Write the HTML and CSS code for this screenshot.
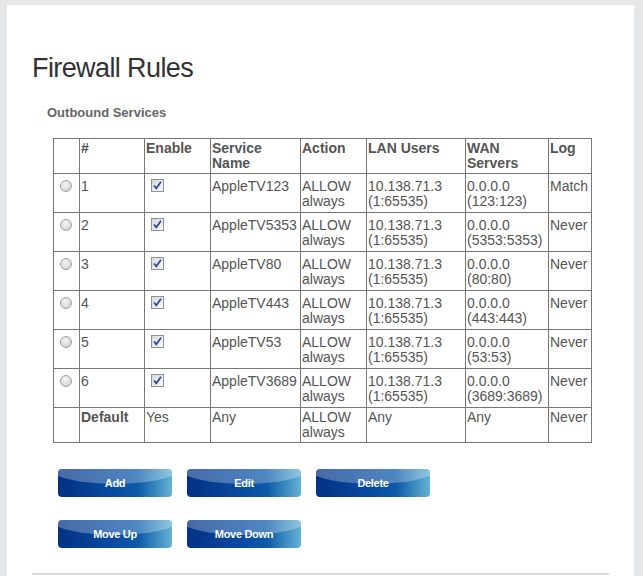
FILE: index.html
```html
<!DOCTYPE html>
<html>
<head>
  <title>Firewall Rules</title>
  <link rel="stylesheet" href="styles.css">
</head>
<body>
  <div class="page">
    <h1>Firewall Rules</h1>

    <div class="section-title">Outbound Services</div>

    <table class="rules">
      <colgroup>
        <col style="width: 26px">
        <col style="width: 65px">
        <col style="width: 66px">
        <col style="width: 90px">
        <col style="width: 66px">
        <col style="width: 99px">
        <col style="width: 83px">
        <col style="width: 43px">
      </colgroup>
      <tr class="head">
        <th></th>
        <th>#</th>
        <th>Enable</th>
        <th>Service Name</th>
        <th>Action</th>
        <th>LAN Users</th>
        <th>WAN Servers</th>
        <th>Log</th>
      </tr>
      <tr class="rule">
        <td><span class="radio"></span></td>
        <td>1</td>
        <td><svg class="check" width="13" height="13" viewBox="0 0 13 13"><rect x="0.5" y="0.5" width="12" height="12" fill="url(#cb)" stroke="#8f9294"/><path d="M3 6.5 L5.3 9.3 L10 2.8" fill="none" stroke="#2a45a0" stroke-width="1.7"/></svg></td>
        <td>AppleTV123</td>
        <td>ALLOW always</td>
        <td>10.138.71.3 (1:65535)</td>
        <td>0.0.0.0 (123:123)</td>
        <td>Match</td>
      </tr>
      <tr class="rule">
        <td><span class="radio"></span></td>
        <td>2</td>
        <td><svg class="check" width="13" height="13" viewBox="0 0 13 13"><rect x="0.5" y="0.5" width="12" height="12" fill="url(#cb)" stroke="#8f9294"/><path d="M3 6.5 L5.3 9.3 L10 2.8" fill="none" stroke="#2a45a0" stroke-width="1.7"/></svg></td>
        <td>AppleTV5353</td>
        <td>ALLOW always</td>
        <td>10.138.71.3 (1:65535)</td>
        <td>0.0.0.0 (5353:5353)</td>
        <td>Never</td>
      </tr>
      <tr class="rule">
        <td><span class="radio"></span></td>
        <td>3</td>
        <td><svg class="check" width="13" height="13" viewBox="0 0 13 13"><rect x="0.5" y="0.5" width="12" height="12" fill="url(#cb)" stroke="#8f9294"/><path d="M3 6.5 L5.3 9.3 L10 2.8" fill="none" stroke="#2a45a0" stroke-width="1.7"/></svg></td>
        <td>AppleTV80</td>
        <td>ALLOW always</td>
        <td>10.138.71.3 (1:65535)</td>
        <td>0.0.0.0 (80:80)</td>
        <td>Never</td>
      </tr>
      <tr class="rule">
        <td><span class="radio"></span></td>
        <td>4</td>
        <td><svg class="check" width="13" height="13" viewBox="0 0 13 13"><rect x="0.5" y="0.5" width="12" height="12" fill="url(#cb)" stroke="#8f9294"/><path d="M3 6.5 L5.3 9.3 L10 2.8" fill="none" stroke="#2a45a0" stroke-width="1.7"/></svg></td>
        <td>AppleTV443</td>
        <td>ALLOW always</td>
        <td>10.138.71.3 (1:65535)</td>
        <td>0.0.0.0 (443:443)</td>
        <td>Never</td>
      </tr>
      <tr class="rule">
        <td><span class="radio"></span></td>
        <td>5</td>
        <td><svg class="check" width="13" height="13" viewBox="0 0 13 13"><rect x="0.5" y="0.5" width="12" height="12" fill="url(#cb)" stroke="#8f9294"/><path d="M3 6.5 L5.3 9.3 L10 2.8" fill="none" stroke="#2a45a0" stroke-width="1.7"/></svg></td>
        <td>AppleTV53</td>
        <td>ALLOW always</td>
        <td>10.138.71.3 (1:65535)</td>
        <td>0.0.0.0 (53:53)</td>
        <td>Never</td>
      </tr>
      <tr class="rule">
        <td><span class="radio"></span></td>
        <td>6</td>
        <td><svg class="check" width="13" height="13" viewBox="0 0 13 13"><rect x="0.5" y="0.5" width="12" height="12" fill="url(#cb)" stroke="#8f9294"/><path d="M3 6.5 L5.3 9.3 L10 2.8" fill="none" stroke="#2a45a0" stroke-width="1.7"/></svg></td>
        <td>AppleTV3689</td>
        <td>ALLOW always</td>
        <td>10.138.71.3 (1:65535)</td>
        <td>0.0.0.0 (3689:3689)</td>
        <td>Never</td>
      </tr>
      <tr class="default">
        <td></td>
        <th>Default</th>
        <td>Yes</td>
        <td>Any</td>
        <td>ALLOW always</td>
        <td>Any</td>
        <td>Any</td>
        <td>Never</td>
      </tr>
    </table>

    <div class="buttons">
      <div class="btn-row">
        <button class="btn">Add</button>
        <button class="btn">Edit</button>
        <button class="btn">Delete</button>
      </div>
      <div class="btn-row">
        <button class="btn">Move Up</button>
        <button class="btn">Move Down</button>
      </div>
    </div>

    <div class="divider"></div>
  </div>

  <svg width="0" height="0" style="position: absolute">
    <defs>
      <linearGradient id="cb" x1="0" y1="0" x2="1" y2="1">
        <stop offset="0" stop-color="#d4d6d8"/>
        <stop offset="1" stop-color="#fbfbfb"/>
      </linearGradient>
    </defs>
  </svg>
</body>
</html>
```

FILE: styles.css
```css
html, body {
  height: 100%;
}

body {
  margin: 0;
  padding: 5px 9px 0 7px;
  background-color: #e6e7e9;
  font-family: "Liberation Sans", Arial, sans-serif;
  overflow: hidden;
  box-sizing: border-box;
}

.page {
  width: 577px;
  min-height: 100%;
  padding: 1px 25px 0 25px;
  background-color: #fff;
}

h1 {
  margin: 46px 0 0 0;
  font-size: 27px;
  line-height: 32px;
  font-weight: normal;
  letter-spacing: -0.6px;
  color: #333;
}

.section-title {
  margin: 21px 0 0 15px;
  font-size: 13px;
  line-height: 16px;
  font-weight: bold;
  color: #666;
}

.rules {
  margin: 17px 0 0 21px;
  width: 539px;
  table-layout: fixed;
  border-collapse: collapse;
  font-size: 14px;
  line-height: 15px;
  color: #555;
}

.rules th,
.rules td {
  border: 1px solid #777;
  padding: 2px 1px 2px 1px;
  text-align: left;
  vertical-align: top;
}

.rules th {
  font-weight: bold;
}

.rules .rule td {
  padding: 5px 1px 3px 1px;
}

.radio {
  display: inline-block;
  vertical-align: top;
  width: 10px;
  height: 10px;
  margin: 1px 0 0 5px;
  border: 1px solid #a3a3a3;
  border-radius: 50%;
  background: radial-gradient(circle at 40% 35%, #f4f4f4 0%, #dedede 55%, #c4c4c4 100%);
}

.check {
  display: inline-block;
  vertical-align: top;
  margin-left: 5px;
}

.buttons {
  margin: 26px 0 0 26px;
}

.btn-row {
  display: flex;
  gap: 15px;
}

.btn-row + .btn-row {
  margin-top: 23px;
}

.btn {
  position: relative;
  overflow: hidden;
  width: 114px;
  height: 28px;
  padding: 0;
  border: none;
  border-radius: 4px;
  background: linear-gradient(to right, #023184 0%, #0749a0 45%, #0c5aa8 70%, #65b2d5 100%);
  font-family: "Liberation Sans", Arial, sans-serif;
  font-size: 11px;
  font-weight: bold;
  letter-spacing: -0.3px;
  color: #fff;
  cursor: pointer;
}

.btn::before {
  content: "";
  position: absolute;
  left: -15%;
  right: -15%;
  top: -30px;
  height: 45px;
  border-radius: 50%;
  background-color: rgba(255, 255, 255, 0.28);
}

.divider {
  margin-top: 25px;
  height: 2px;
  background-color: #dcdcdc;
}
```
